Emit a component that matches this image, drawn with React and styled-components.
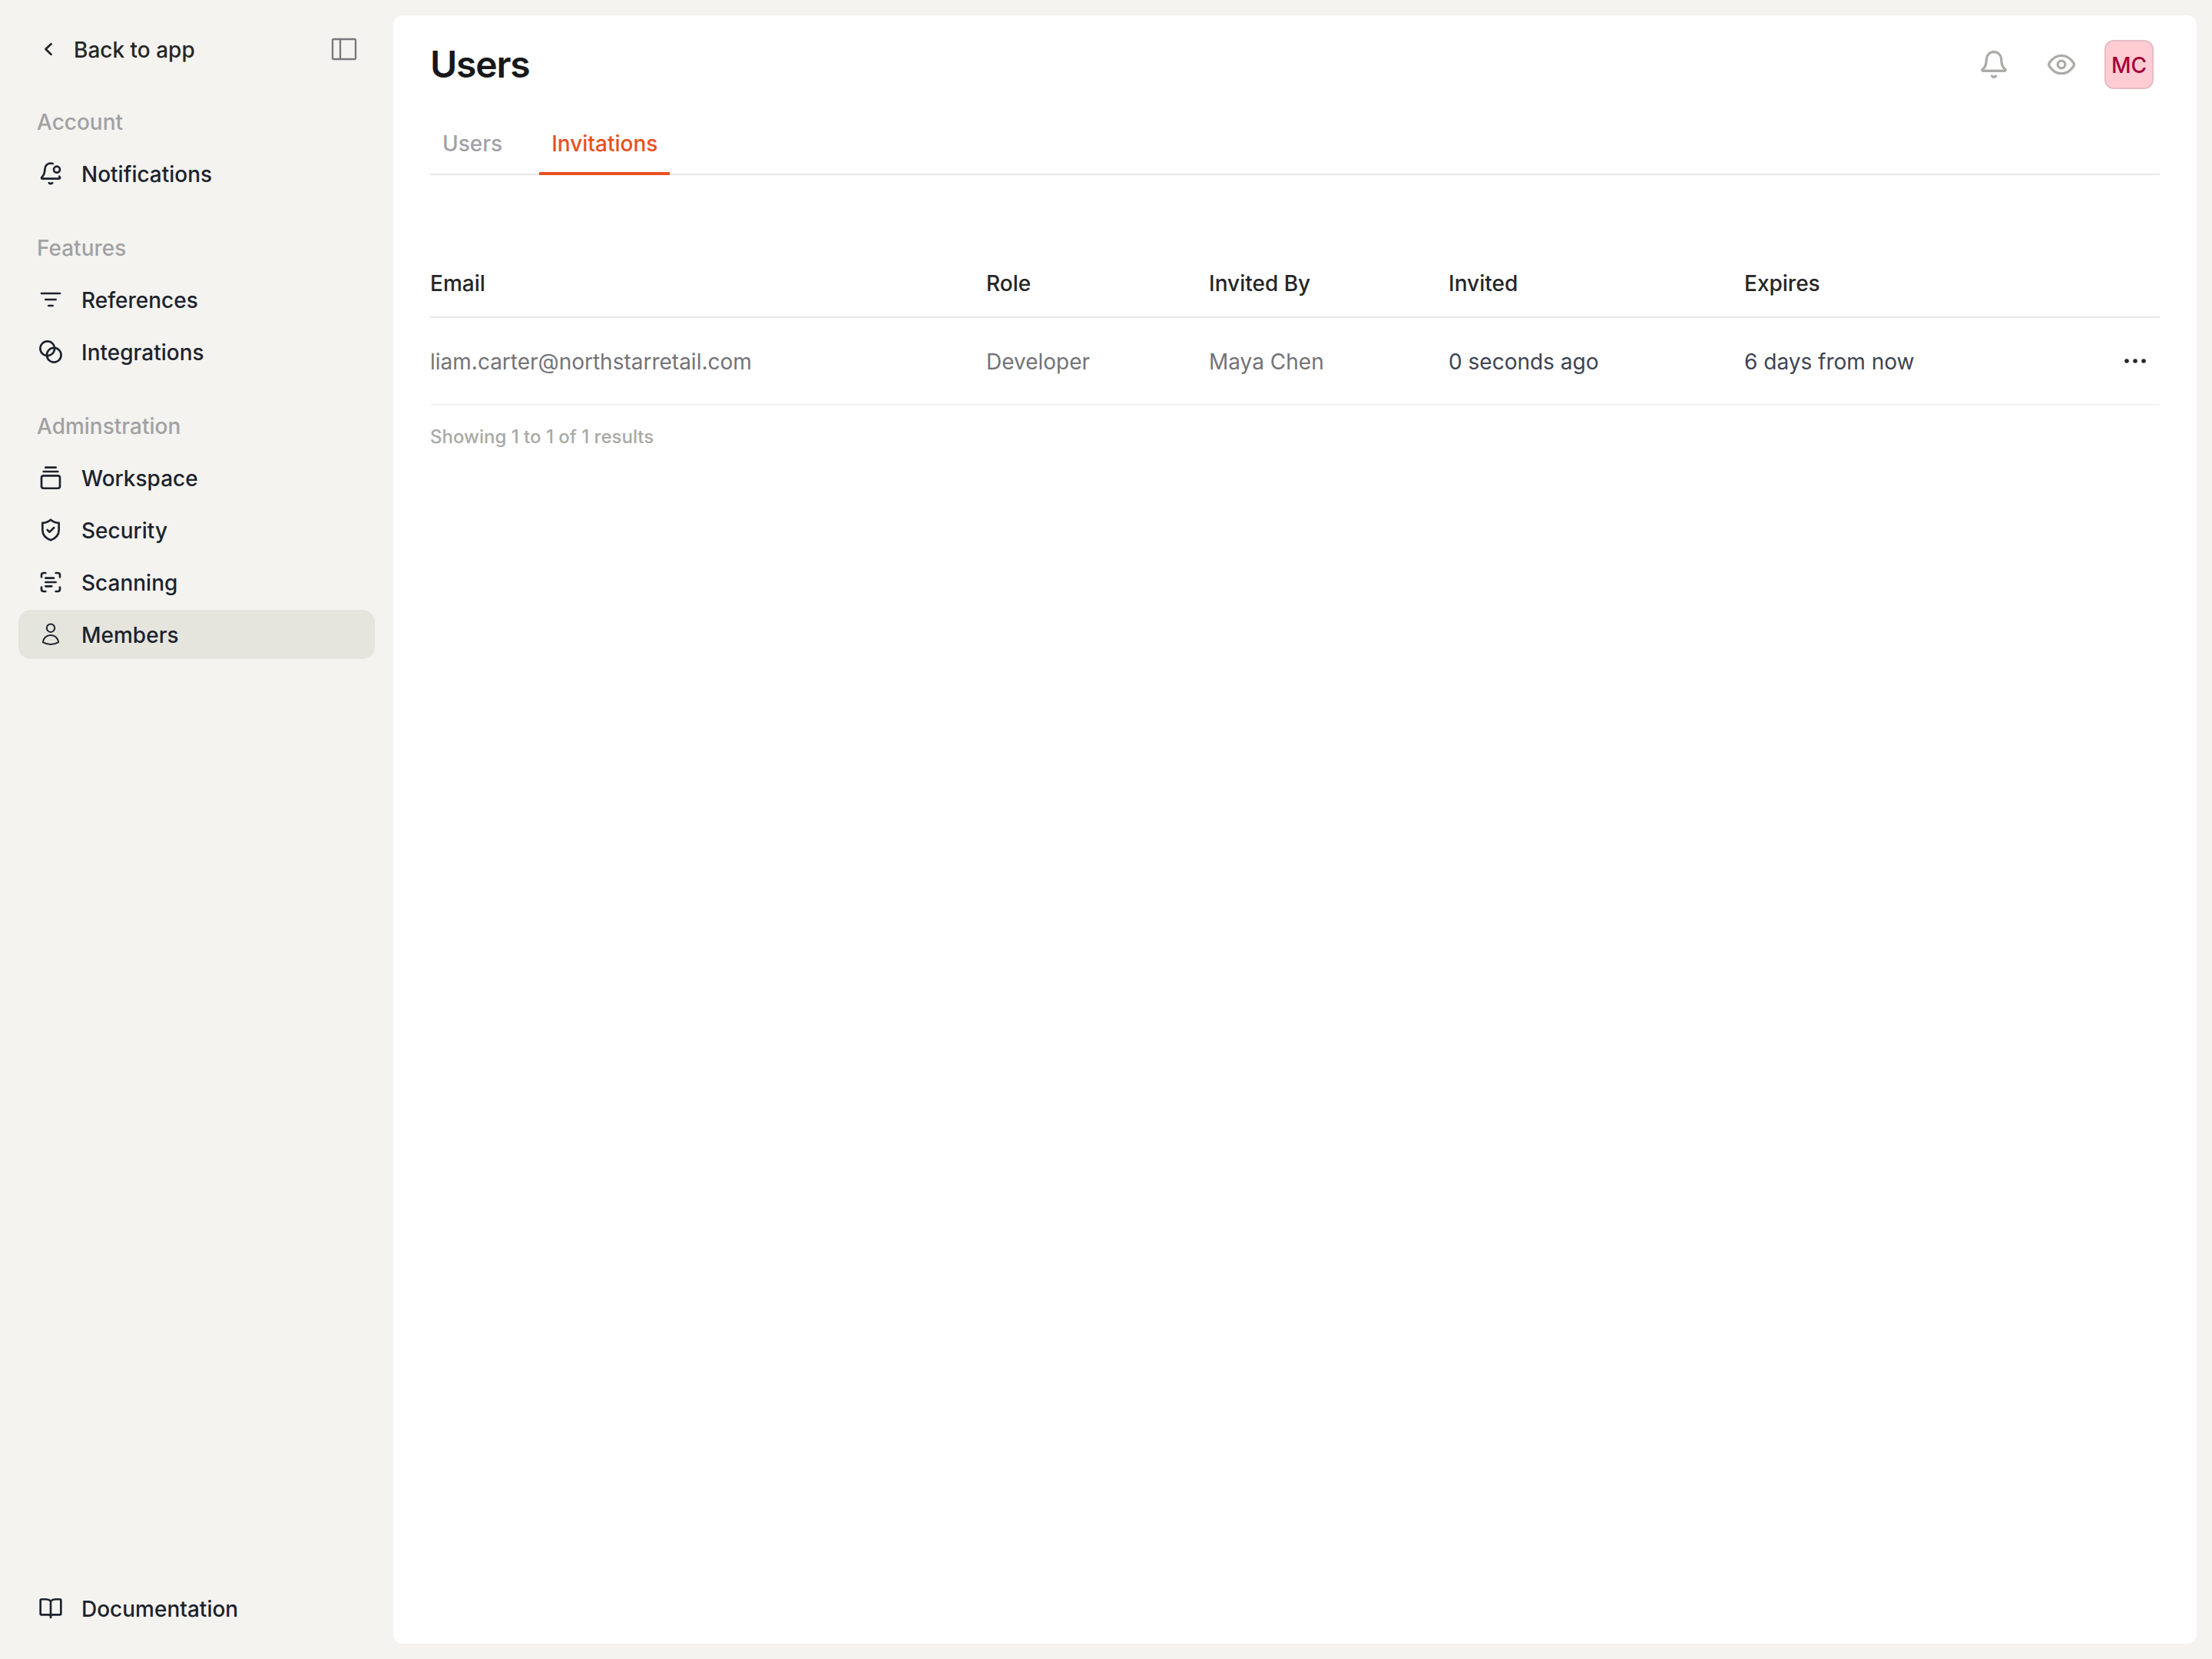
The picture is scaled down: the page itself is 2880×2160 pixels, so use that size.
import React, { useState } from 'react';
import styled, { createGlobalStyle } from 'styled-components';

const GlobalStyle = createGlobalStyle`
  * {
    box-sizing: border-box;
  }

  body {
    margin: 0;
    background-color: #f4f3ef;
    font-family: Inter, 'Liberation Sans', sans-serif;
    font-size: 28px;
    line-height: 40px;
    color: #262626;
  }
`;

const Layout = styled.div`
  display: flex;
  height: 2160px;
  padding: 20px 20px 20px 0;
`;

const Sidebar = styled.aside`
  display: flex;
  flex-direction: column;
  width: 512px;
  padding: 12px 24px 14px;
`;

const SidebarTop = styled.div`
  display: flex;
  align-items: center;
  justify-content: space-between;
  height: 64px;
  padding: 0 20px 0 24px;
  margin-bottom: 43px;
`;

const BackLink = styled.a`
  display: flex;
  align-items: center;
  gap: 16px;
  font-weight: 500;
  cursor: pointer;
`;

const Label = styled.span`
  padding-top: 2px;
`;

const IconButton = styled.button`
  display: flex;
  align-items: center;
  justify-content: center;
  width: ${(props) => props.$size}px;
  height: ${(props) => props.$size}px;
  padding: 0;
  border: none;
  background: none;
  color: ${(props) => props.$color};
  cursor: pointer;
`;

const NavGroup = styled.div`
  display: flex;
  flex-direction: column;
  gap: 4px;
  margin-bottom: 45px;
`;

const NavHeading = styled.div`
  padding: 0 24px;
  margin-bottom: 11px;
  font-weight: 500;
  color: #a1a1a4;
`;

const NavItem = styled.a`
  display: flex;
  align-items: center;
  gap: 24px;
  height: 64px;
  padding: 0 26px;
  border-radius: 16px;
  background-color: ${(props) => (props.$active ? '#e5e5dd' : 'transparent')};
  font-weight: 500;
  color: #1c222e;
  cursor: pointer;
`;

const SidebarFooter = styled.div`
  margin-top: auto;
`;

const Icon = styled.svg`
  flex-shrink: 0;
  fill: none;
  stroke: currentColor;
  stroke-linecap: round;
  stroke-linejoin: round;
`;

const Main = styled.main`
  flex: 1;
  padding: 32px 48px;
  border-radius: 12px;
  background-color: #fff;
`;

const Header = styled.header`
  display: flex;
  align-items: center;
  justify-content: space-between;
  height: 64px;
  padding-right: 8px;
`;

const Title = styled.h1`
  margin: 0;
  font-size: 48px;
  line-height: 64px;
  font-weight: 600;
  letter-spacing: -0.025em;
  color: #18181b;
`;

const HeaderActions = styled.div`
  display: flex;
  align-items: center;
  gap: 24px;
`;

const Avatar = styled.div`
  display: flex;
  align-items: center;
  justify-content: center;
  width: 64px;
  height: 64px;
  border: 2px solid #e6bcc5;
  border-radius: 12px;
  background-color: #ffccd3;
  font-weight: 500;
  color: #a50036;
`;

const Tabs = styled.div`
  display: flex;
  gap: 32px;
  height: 80px;
  margin-top: 32px;
  border-bottom: 2px solid #e7e7e7;
`;

const Tab = styled.button`
  height: 80px;
  margin-bottom: -2px;
  padding: 2px 16px 0;
  border: none;
  border-bottom: 4px solid ${(props) => (props.$active ? '#e8501f' : 'transparent')};
  background: none;
  font: inherit;
  font-weight: 500;
  color: ${(props) => (props.$active ? '#e8501f' : '#a1a1a6')};
  cursor: pointer;
`;

const Table = styled.div`
  display: flex;
  flex-direction: column;
  margin-top: 98px;
`;

const TableRow = styled.div`
  display: grid;
  grid-template-columns: 724px 290px 312px 385px 1fr;
  align-items: center;
  height: ${(props) => (props.$head ? 88 : 114)}px;
  border-bottom: 2px solid ${(props) => (props.$head ? '#e7e7e7' : '#f3f3f3')};
  font-weight: ${(props) => (props.$head ? 500 : 400)};
`;

const HeadCell = styled.div`
  color: #262626;
`;

const Cell = styled.div`
  padding-top: 2px;
  color: ${(props) => props.$color};
`;

const LastCell = styled.div`
  display: flex;
  align-items: center;
  justify-content: space-between;
  color: #3d4452;
`;

const Summary = styled.p`
  margin: 25px 0 0;
  font-size: 24px;
  line-height: 32px;
  font-weight: 500;
  color: #a9a9a5;
`;

const navGroups = [
  {
    title: 'Account',
    items: ['Notifications'],
  },
  {
    title: 'Features',
    items: ['References', 'Integrations'],
  },
  {
    title: 'Adminstration',
    items: ['Workspace', 'Security', 'Scanning', 'Members'],
  },
];

const navIcons = {
  Notifications: (
    <>
      <path d="M14 2.3C13.4 2.1 12.7 2 12 2 9 2 6.8 4.1 6.4 7L6 10.5c-.2 1.5-.7 2.6-1.6 3.8L3.2 15.8c-.4.6-.1 1.2.6 1.2H20.2c.8 0 1.1-.8.7-1.4l-.5-.8" />
      <circle cx="18" cy="8" r="3" />
      <path d="M10.4 21.1c.4.5 1 .8 1.6.8s1.2-.3 1.6-.8" />
    </>
  ),
  References: <path d="M3 6h18M7 12h10M10 18h4" />,
  Integrations: (
    <>
      <circle cx="8.8" cy="8.8" r="7" />
      <circle cx="15.2" cy="15.2" r="7" />
    </>
  ),
  Workspace: (
    <>
      <path d="M7 2h10M5 6h14" />
      <rect x="3" y="10" width="18" height="12.3" rx="2" />
    </>
  ),
  Security: (
    <>
      <path d="M12 2c2 1.8 4.6 2.9 8 3.1V12c0 4.6-2.7 8-8 10-5.3-2-8-5.4-8-10V5.1C7.4 4.9 10 3.8 12 2Z" />
      <path d="M8.800 12 10.9 14 15.2 9.8" />
    </>
  ),
  Scanning: (
    <>
      <path d="M7 3H5a2 2 0 0 0-2 2v2M17 3h2a2 2 0 0 1 2 2v2M21 17v2a2 2 0 0 1-2 2h-2M7 21H5a2 2 0 0 1-2-2v-2" />
      <path d="M7 8h8M7 12h10M7 16h6" />
    </>
  ),
  Members: (
    <g strokeWidth="1.5">
      <circle cx="12" cy="5.8" r="3.9" />
      <path d="M12 12.7c-4 0-7.1 2.9-7.6 6.9 2.2 1.4 4.8 2.1 7.6 2.1s5.400-.7 7.600-2.1c-.5-4-3.600-6.900-7.600-6.900Z" />
    </g>
  ),
  Documentation: (
    <path d="M12 4.900C11 3.800 9.500 3.200 7.500 3.200H3a1 1 0 0 0-1 1V17.300a1 1 0 0 0 1 1H10c1.200 0 2 .9 2 2 0-1.100.8-2 2-2H21a1 1 0 0 0 1-1V4.200a1 1 0 0 0-1-1h-4.500C14.500 3.200 13 3.800 12 4.900ZM12 5V21" />
  ),
};

const invitations = [
  {
    email: 'liam.carter@northstarretail.com',
    role: 'Developer',
    invitedBy: 'Maya Chen',
    invited: '0 seconds ago',
    expires: '6 days from now',
  },
];

const NavLink = ({ name, active, onClick }) => (
  <NavItem $active={active} onClick={onClick}>
    <Icon width="32" height="32" viewBox="0 0 24 24" strokeWidth="2">
      {navIcons[name]}
    </Icon>
    <Label>{name}</Label>
  </NavItem>
);

export default function App() {
  const [page, setPage] = useState('Members');
  const [tab, setTab] = useState('Invitations');

  return (
    <>
      <GlobalStyle />
      <Layout>
        <Sidebar>
          <SidebarTop>
            <BackLink>
              <Icon width="32" height="32" viewBox="0 0 32 32" strokeWidth="2.8">
                <path d="M18.500 9.300 11.500 16 18.500 22.700" />
              </Icon>
              <Label>Back to app</Label>
            </BackLink>
            <IconButton $size={40} $color="#7a777a">
              <Icon width="40" height="40" viewBox="0 0 40 40" strokeWidth="2.3">
                <rect x="5" y="7" width="30" height="26" rx="1.5" />
                <path d="M15 7v26" />
              </Icon>
            </IconButton>
          </SidebarTop>

          {navGroups.map((group) => (
            <NavGroup key={group.title}>
              <NavHeading>{group.title}</NavHeading>
              {group.items.map((name) => (
                <NavLink key={name} name={name} active={page === name} onClick={() => setPage(name)} />
              ))}
            </NavGroup>
          ))}

          <SidebarFooter>
            <NavLink name="Documentation" />
          </SidebarFooter>
        </Sidebar>

        <Main>
          <Header>
            <Title>Users</Title>
            <HeaderActions>
              <IconButton $size={64} $color="#acaca6">
                <Icon width="36" height="36" viewBox="0 0 24 24" strokeWidth="2.2">
                  <path d="M12 1C8.500 1 5.900 3.600 5.600 7L5.300 10.300c-.1 1.500-.6 2.800-1.300 4L2.100 16.200c-.5.700-.1 1.300.7 1.300H21.200c.8 0 1.200-.6.700-1.300L20 14.300c-.7-1.200-1.200-2.500-1.300-4L18.400 7C18.100 3.600 15.500 1 12 1Z" />
                  <path d="M10.300 22c.4.600 1 .9 1.700.9s1.300-.3 1.700-.9" />
                </Icon>
              </IconButton>
              <IconButton $size={64} $color="#acaca6">
                <Icon width="36" height="36" viewBox="0 0 24 24" strokeWidth="2.2">
                  <path d="M1.400 13.200c-.5-.7-.5-1.700 0-2.400C3.900 6.800 7.500 4.200 12 4.200s8.100 2.600 10.600 6.600c.5.700.5 1.700 0 2.400C20.100 17.200 16.500 19.800 12 19.800S3.900 17.200 1.400 13.200Z" />
                  <circle cx="12" cy="12" r="3.2" />
                </Icon>
              </IconButton>
              <Avatar>
                <Label>MC</Label>
              </Avatar>
            </HeaderActions>
          </Header>

          <Tabs>
            {['Users', 'Invitations'].map((name) => (
              <Tab key={name} $active={tab === name} onClick={() => setTab(name)}>
                {name}
              </Tab>
            ))}
          </Tabs>

          <Table>
            <TableRow $head>
              <HeadCell>Email</HeadCell>
              <HeadCell>Role</HeadCell>
              <HeadCell>Invited By</HeadCell>
              <HeadCell>Invited</HeadCell>
              <HeadCell>Expires</HeadCell>
            </TableRow>
            {invitations.map((row) => (
              <TableRow key={row.email}>
                <Cell $color="#737377">{row.email}</Cell>
                <Cell $color="#737377">{row.role}</Cell>
                <Cell $color="#737377">{row.invitedBy}</Cell>
                <Cell $color="#3d4452">{row.invited}</Cell>
                <LastCell>
                  <Label>{row.expires}</Label>
                  <IconButton $size={64} $color="#262626">
                    <Icon width="32" height="32" viewBox="0 0 32 32" strokeWidth="5.6">
                      <path d="M5 16h.01M16 16h.01M27 16h.01" />
                    </Icon>
                  </IconButton>
                </LastCell>
              </TableRow>
            ))}
          </Table>
          <Summary>Showing 1 to 1 of 1 results</Summary>
        </Main>
      </Layout>
    </>
  );
}
